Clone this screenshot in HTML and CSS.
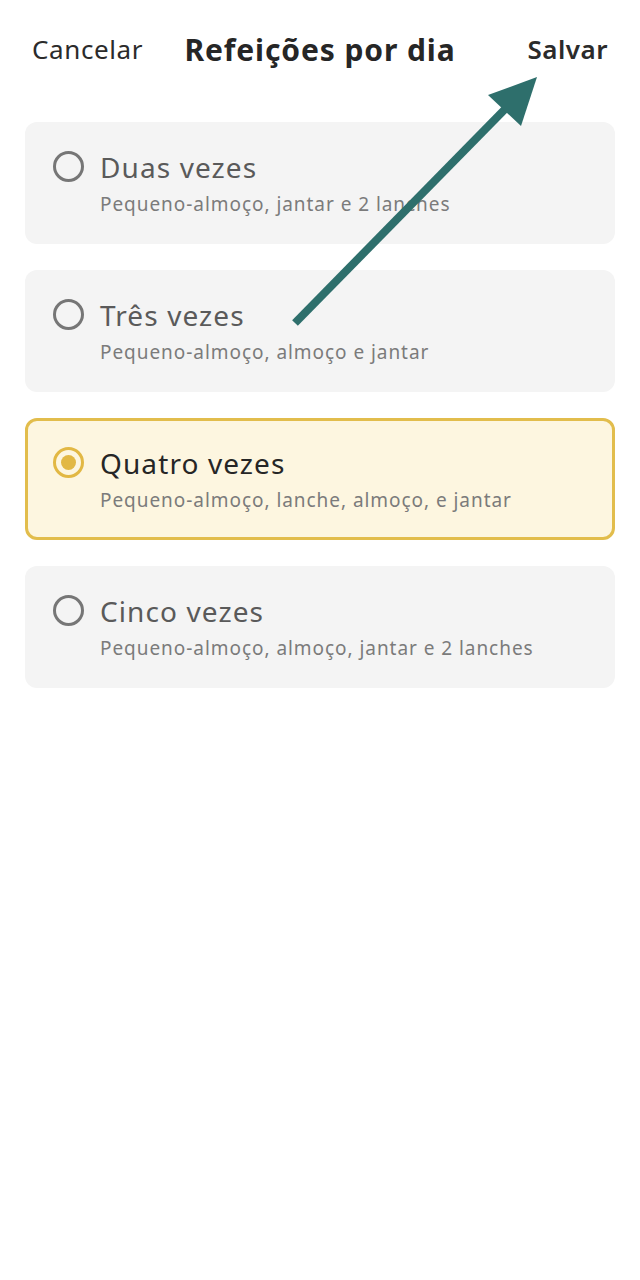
FILE: index.html
```html
<!DOCTYPE html>
<html lang="pt">
<head>
<meta charset="utf-8">
<title>Refeições por dia</title>
<link rel="stylesheet" href="styles.css">
</head>
<body>
<div class="page">
  <header class="topbar">
    <span class="cancel">Cancelar</span>
    <h1 class="title">Refeições por dia</h1>
    <span class="save">Salvar</span>
  </header>
  <main class="options">
    <div class="option">
      <span class="radio"></span>
      <div class="texts">
        <div class="opt-title">Duas vezes</div>
        <div class="opt-sub">Pequeno-almoço, jantar e 2 lanches</div>
      </div>
    </div>
    <div class="option">
      <span class="radio"></span>
      <div class="texts">
        <div class="opt-title">Três vezes</div>
        <div class="opt-sub">Pequeno-almoço, almoço e jantar</div>
      </div>
    </div>
    <div class="option selected">
      <span class="radio"></span>
      <div class="texts">
        <div class="opt-title">Quatro vezes</div>
        <div class="opt-sub">Pequeno-almoço, lanche, almoço, e jantar</div>
      </div>
    </div>
    <div class="option">
      <span class="radio"></span>
      <div class="texts">
        <div class="opt-title">Cinco vezes</div>
        <div class="opt-sub">Pequeno-almoço, almoço, jantar e 2 lanches</div>
      </div>
    </div>
  </main>
  <svg class="arrow" width="640" height="400" viewBox="0 0 640 400" aria-hidden="true">
    <line x1="295" y1="323" x2="510" y2="104" stroke="#2e6f6c" stroke-width="8"/>
    <polygon points="537,77 488,95 521,126" fill="#2e6f6c"/>
  </svg>
</div>
</body>
</html>
```
FILE: styles.css
```css
html, body {
  margin: 0;
  padding: 0;
  background: #ffffff;
}
body {
  font-family: "Noto Sans", "Open Sans", sans-serif;
  color: #2a2a2a;
}
.page {
  position: relative;
  width: 640px;
  min-height: 1280px;
}
.topbar {
  display: grid;
  grid-template-columns: 1fr auto 1fr;
  align-items: center;
  height: 100px;
  padding: 0 32px 2px 32px;
  box-sizing: border-box;
}
.cancel {
  font-size: 26px;
  letter-spacing: 0.6px;
  color: #2b2b2b;
  justify-self: start;
}
.title {
  margin: 0;
  font-size: 30px;
  letter-spacing: 0.9px;
  font-weight: 700;
  color: #262626;
}
.save {
  font-size: 26px;
  letter-spacing: 0.5px;
  font-weight: 600;
  color: #2b2b2b;
  justify-self: end;
}
.options {
  display: flex;
  flex-direction: column;
  gap: 26px;
  padding: 22px 25px 0 25px;
}
.option {
  display: flex;
  align-items: flex-start;
  gap: 16px;
  height: 122px;
  box-sizing: border-box;
  padding: 26px 20px 0 28px;
  background: #f4f4f4;
  border-radius: 12px;
  border: 2px solid transparent;
}
.radio {
  flex: none;
  width: 31px;
  height: 31px;
  box-sizing: border-box;
  border: 3px solid #767676;
  border-radius: 50%;
  margin-top: 1px;
  margin-left: -2px;
  display: flex;
  align-items: center;
  justify-content: center;
}
.texts {
  display: flex;
  flex-direction: column;
  gap: 8px;
}
.opt-title {
  font-size: 28px;
  line-height: 34px;
  letter-spacing: 1.1px;
  color: #5a5a5a;
}
.opt-sub {
  font-size: 19px;
  line-height: 24px;
  letter-spacing: 0.95px;
  color: #7b7b7b;
}
.option.selected {
  background: #fdf6e0;
  border: 3px solid #e2bd4c;
  padding-top: 25px;
  padding-left: 27px;
}
.option.selected .radio {
  border-color: #e2b844;
}
.option.selected .radio::after {
  content: "";
  width: 15px;
  height: 15px;
  border-radius: 50%;
  background: #e2b844;
}
.option.selected .opt-title {
  color: #262626;
}
.arrow {
  position: absolute;
  left: 0;
  top: 0;
  pointer-events: none;
}
```
